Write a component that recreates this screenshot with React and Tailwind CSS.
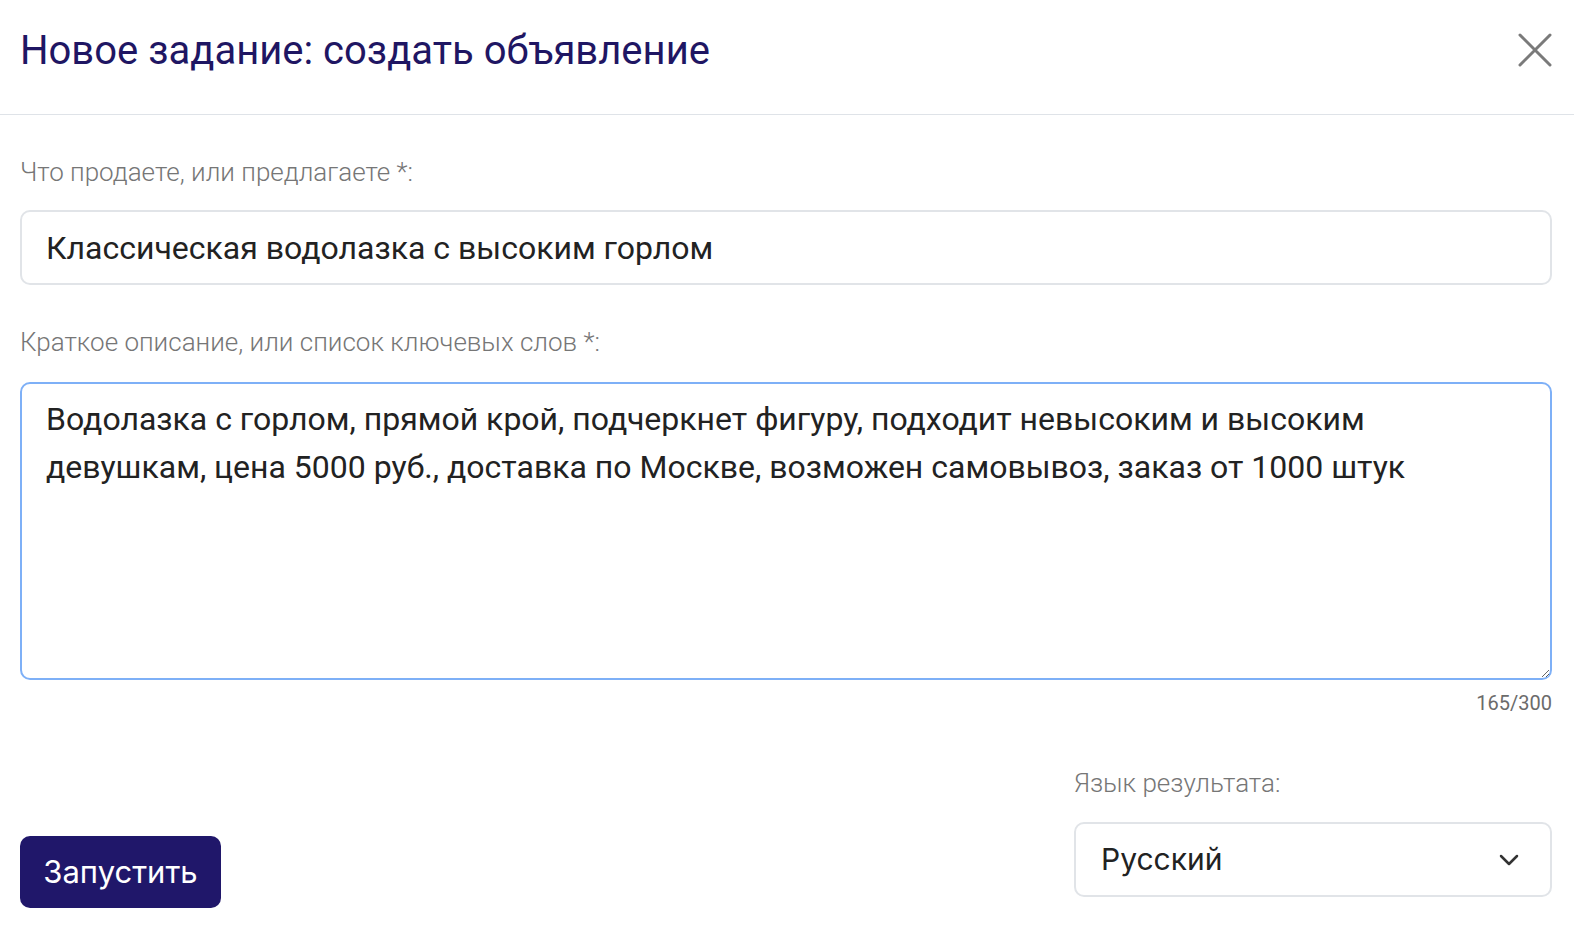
import React from 'react'

function App() {
  return (
    <div className="w-full h-[940px] bg-white font-['Roboto',sans-serif] overflow-hidden">
      <div className="flex items-center justify-between h-[115px] pb-[14px] border-b border-[#dfe3e8] pl-5 pr-[22px]">
        <h1 className="text-[40px] leading-[46px] text-[#1f1663] mt-[2px]">Новое задание: создать объявление</h1>
        <button className="w-[34px] h-[34px] flex items-center justify-center cursor-pointer">
          <svg width="34" height="34" viewBox="0 0 34 34" fill="none" stroke="#7a7a7a" strokeWidth="3" strokeLinecap="round">
            <path d="M2 2 L32 32 M32 2 L2 32" />
          </svg>
        </button>
      </div>

      <div className="pl-5 pr-[22px]">
        <p className="mt-[41px] text-[26px] leading-[32px] font-light text-[#767676]">Что продаете, или предлагаете *:</p>
        <input
          type="text"
          defaultValue="Классическая водолазка с высоким горлом"
          className="mt-[22px] w-full h-[75px] border-2 border-[#e1e4e8] rounded-[10px] px-6 text-[32px] text-[#222] outline-none"
        />

        <p className="mt-[41px] text-[26px] leading-[32px] font-light text-[#767676]">Краткое описание, или список ключевых слов *:</p>
        <textarea
          defaultValue="Водолазка с горлом, прямой крой, подчеркнет фигуру, подходит невысоким и высоким девушкам, цена 5000 руб., доставка по Москве, возможен самовывоз, заказ от 1000 штук"
          className="mt-[24px] block w-full h-[298px] border-2 border-[#7eb0f7] rounded-[10px] px-6 pt-[11px] text-[32px] leading-[48px] text-[#222] outline-none resize-y"
        />
        <p className="mt-[9px] text-right text-[20px] leading-[28px] text-[#6b6b6b]">165/300</p>

        <div className="flex justify-between items-end mt-[50px]">
          <button className="mb-[-11px] h-[72px] w-[201px] rounded-[10px] bg-[#20176a] text-white text-[31px] font-['Inter',sans-serif] cursor-pointer">
            Запустить
          </button>
          <div className="w-[478px]">
            <p className="text-[26px] leading-[32px] font-light text-[#767676]">Язык результата:</p>
            <div className="mt-[23px] h-[75px] border-2 border-[#e1e4e8] rounded-[10px] flex items-center justify-between pl-[25px] pr-[30px]">
              <span className="text-[30px] text-[#222] font-['Inter',sans-serif]">Русский</span>
              <svg width="22" height="14" viewBox="0 0 22 14" fill="none" stroke="#333" strokeWidth="2.5" strokeLinecap="round" strokeLinejoin="round">
                <path d="M3 3 L11 11 L19 3" />
              </svg>
            </div>
          </div>
        </div>
      </div>
    </div>
  )
}

export default App
